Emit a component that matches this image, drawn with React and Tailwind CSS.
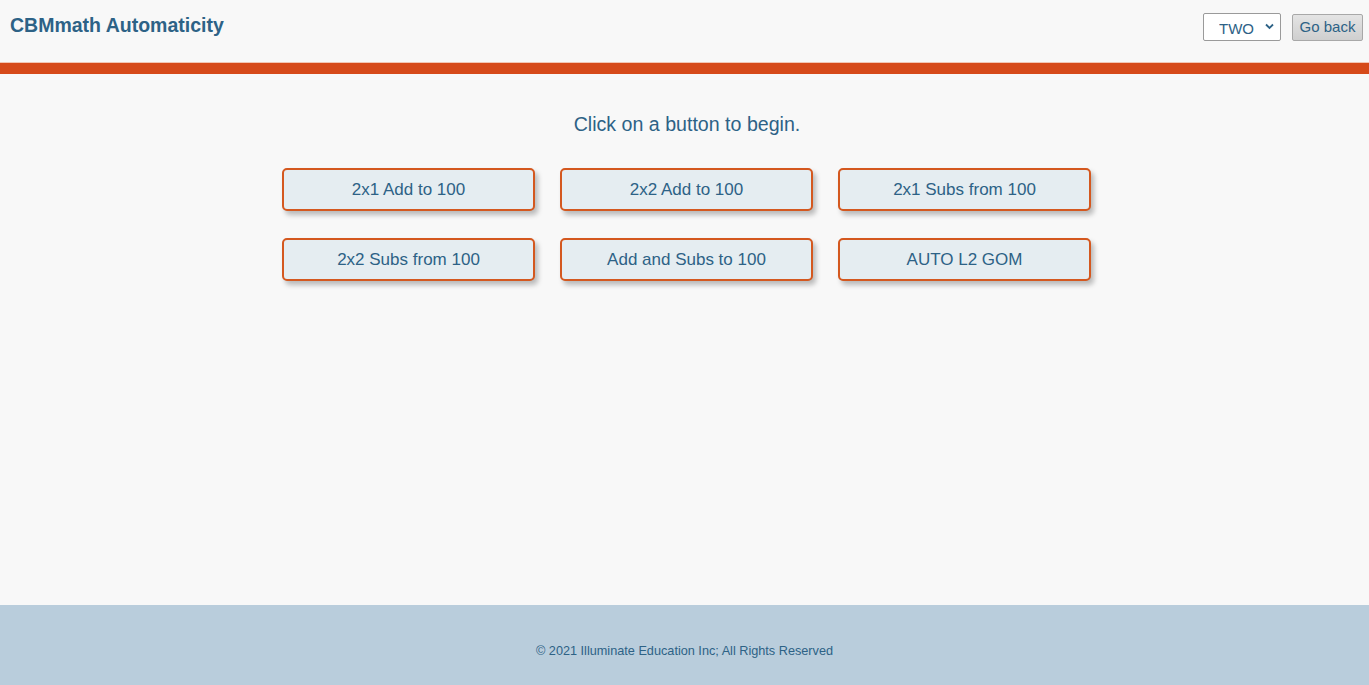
import React, { useState } from 'react';

const tests = [
  '2x1 Add to 100',
  '2x2 Add to 100',
  '2x1 Subs from 100',
  '2x2 Subs from 100',
  'Add and Subs to 100',
  'AUTO L2 GOM',
];

const App = () => {
  const [grade, setGrade] = useState('TWO');

  return (
    <div
      className="min-h-screen flex flex-col bg-[#f8f8f8] text-[#2d6286]"
      style={{ fontFamily: '"Liberation Sans", Arial, sans-serif' }}
    >
      <header className="h-[63px] flex items-start justify-between pl-[10px] pr-[6px] pt-[13px] border-b border-[#f2c6b4]">
        <h1 className="text-[19.5px] font-bold leading-[24px]">CBMmath Automaticity</h1>
        <div className="flex items-center gap-[11px]">
          <div className="relative">
            <select
              value={grade}
              onChange={(e) => setGrade(e.target.value)}
              className="appearance-none w-[78px] h-[28px] bg-white border border-[#9a9a9a] rounded-[2px] pl-[15px] pt-[4px] text-[15px] text-[#2d6286] outline-none"
            >
              <option>ONE</option>
              <option>TWO</option>
              <option>THREE</option>
            </select>
            <svg
              className="absolute right-[7px] top-[10px] pointer-events-none"
              width="9"
              height="7"
              viewBox="0 0 9 7"
            >
              <path d="M1 1.5 L4.5 5 L8 1.5" fill="none" stroke="#2d6286" strokeWidth="1.8" />
            </svg>
          </div>
          <button className="h-[27px] w-[71px] text-[15px] text-[#2d6286] border border-[#a8a8a8] rounded-[2px] bg-gradient-to-b from-[#e4e4e4] to-[#cfcfcf]">
            Go back
          </button>
        </div>
      </header>
      <div className="h-[11px] bg-[#d64a1a]" />

      <main className="flex-1 flex flex-col items-center pt-[38px]">
        <p className="text-[19.6px] leading-[24px] ml-[5px]">Click on a button to begin.</p>
        <div className="grid grid-cols-3 gap-x-[25px] gap-y-[27px] mt-[32px] ml-[4px]">
          {tests.map((t) => (
            <button
              key={t}
              className="w-[253px] h-[43px] bg-[#e5edf1] border-2 border-[#d4581f] rounded-[5px] text-[17px] text-[#2d6286] shadow-[3px_4px_5px_rgba(0,0,0,0.25)]"
            >
              {t}
            </button>
          ))}
        </div>
      </main>

      <footer className="h-[80px] bg-[#b9cddc] flex items-center justify-center pt-[14px]">
        <p className="text-[12.7px] text-[#2d6286]">© 2021 Illuminate Education Inc; All Rights Reserved</p>
      </footer>
    </div>
  );
};

export default App;
